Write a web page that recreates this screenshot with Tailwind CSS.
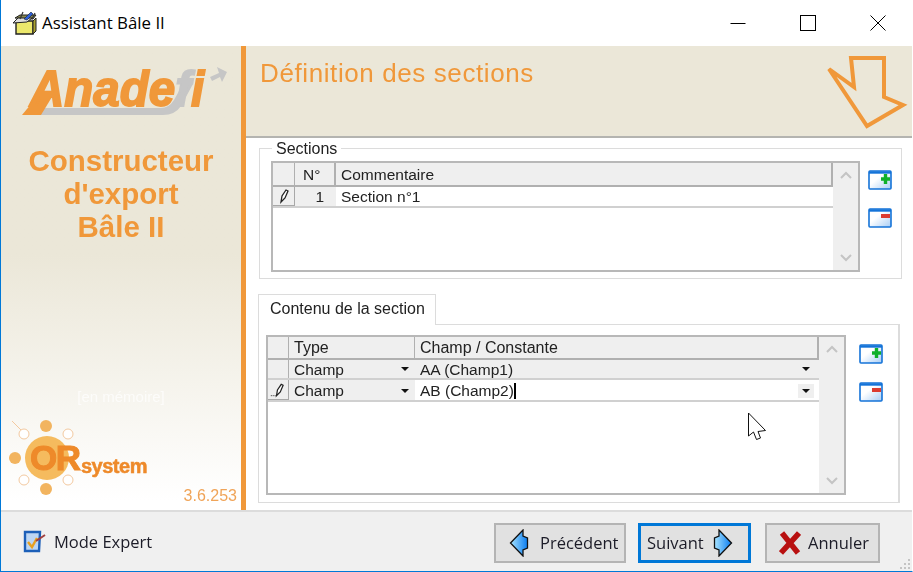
<!DOCTYPE html>
<html><head><meta charset="utf-8"><script src="https://cdn.jsdelivr.net/npm/@tailwindcss/browser@4"></script></head>
<body class="m-0 overflow-hidden">
<div class="relative w-[913px] h-[572px] bg-white flex flex-col border-l border-r border-b border-[#0078d7] border-r-white font-['Open_Sans',sans-serif] overflow-hidden">
  <!-- title bar -->
  <div class="h-[46px] flex items-center bg-white shrink-0">
    <svg class="ml-[11px] w-[26px] h-[26px]" viewBox="0 0 26 26">
      <path d="M3 8 L8 5 L24 5 L21 9 Z" fill="#8a8a50" stroke="#222" stroke-width="1"/>
      <path d="M4 11 H21 V24 H4 Z" fill="#ece86c" stroke="#222" stroke-width="1.4"/>
      <path d="M21 11 L24 8 V21 L21 24 Z" fill="#a8a030" stroke="#222" stroke-width="1"/>
      <path d="M1 13 L6 8 L20 8 L15 12 Z" fill="#dedede" stroke="#222" stroke-width="1"/>
      <path d="M12 9 L19 2 L21 4 L15 10 Z" fill="#2f5fd8" stroke="#123" stroke-width=".6"/>
      <path d="M8 9 L11 2 M20 9 L23 3" stroke="#333" stroke-width="1.2"/>
    </svg>
    <span class="ml-[4px] text-[16.85px] text-black leading-none">Assistant Bâle II</span>
    <div class="ml-auto flex items-center mr-[26px]">
      <svg class="w-[16px] h-[16px]" viewBox="0 0 16 16"><path d="M0.5 8.5 H15.5" stroke="#000"/></svg>
      <svg class="ml-[54px] w-[16px] h-[16px]" viewBox="0 0 16 16"><rect x=".5" y=".5" width="15" height="15" fill="none" stroke="#000"/></svg>
      <svg class="ml-[54px] w-[16px] h-[16px]" viewBox="0 0 16 16"><path d="M.5 .5 L15.5 15.5 M15.5 .5 L.5 15.5" stroke="#000"/></svg>
    </div>
  </div>

  <div class="flex h-[464px] shrink-0 [filter:blur(0.35px)]">
    <!-- left panel -->
    <div class="w-[240px] shrink-0 flex flex-col bg-gradient-to-b from-[#ebe7d8] from-[45%] to-white to-[98%] relative">
      <svg class="mt-[18px] w-[240px] h-[58px] block shrink-0" viewBox="0 0 240 58">
        <path d="M37 44 H160 Q168 44 173 36 L182 20 H192 L180 42 Q174 51 162 51 H37 Z" fill="#c6c6c6"/>
        <path d="M209 13 L218 9 L216 3 L226 8 L221 18 L219 13 L211 17 Z" fill="#c6c6c6"/>
        <path d="M21 51 L40 28 L54 28 L40 51 Z" fill="#f0983a"/>
        <text transform="translate(29,42) scale(0.95,1)" x="0" y="0" font-family="Liberation Sans" font-weight="700" font-style="italic" font-size="50" fill="#f0983a" stroke="#f0983a" stroke-width="1.8">Anade<tspan fill="#c6c6c6" stroke="#c6c6c6">f</tspan>i</text>
      </svg>
      <div class="mt-[22px] text-center font-['Liberation_Sans',sans-serif] font-bold text-[29.5px] leading-[33px] text-[#f0983a] shrink-0">Constructeur<br>d'export<br>Bâle II</div>
      <div class="mt-[145px] text-center font-['Liberation_Sans',sans-serif] text-[15px] leading-[18px] text-white/70 shrink-0">[en mémoire]</div>
      <div class="relative h-[104px] shrink-0">
        <svg class="w-[160px] h-[100px] block" viewBox="0 0 160 100">
          <g transform="translate(-1,-406)">
          <path d="M12 421 L22 431" stroke="#f3c9a0" stroke-width="1"/>
          <circle cx="46" cy="426" r="6" fill="#f2b45f"/><circle cx="46" cy="489" r="6" fill="#f2b45f"/><circle cx="15" cy="458" r="6" fill="#f2b45f"/>
          <circle cx="24" cy="434" r="5" fill="#fff" stroke="#f3c9a0"/><circle cx="68" cy="434" r="5" fill="#fff" stroke="#f3c9a0"/><circle cx="24" cy="480" r="5" fill="#fff" stroke="#f3c9a0"/><circle cx="68" cy="480" r="5" fill="#fff" stroke="#f3c9a0"/>
          <circle cx="47" cy="458" r="22" fill="#f5bb5e"/>
          <text x="30" y="470" font-family="Liberation Sans" font-weight="700" font-size="35" fill="#ee8a2a" stroke="#ee8a2a" stroke-width="1" letter-spacing="-1.5">OR</text>
          <text x="81" y="473" font-family="Liberation Sans" font-weight="700" font-size="20" fill="#ee8a2a" stroke="#ee8a2a" stroke-width=".5" letter-spacing="-.5">system</text>
          </g>
        </svg>
        <span class="absolute right-[4px] bottom-[5px] font-['Liberation_Sans',sans-serif] text-[16px] leading-[18px] text-[#f0a458]">3.6.253</span>
      </div>
    </div>
    <div class="w-[5px] shrink-0 bg-[#f0983a]"></div>

    <!-- right -->
    <div class="flex-1 flex flex-col bg-white min-w-0">
      <div class="h-[92px] shrink-0 bg-[#ebe7d8] border-b-2 border-[#b4b4b0] relative">
        <div class="pl-[14px] pt-[11px] font-['Liberation_Sans',sans-serif] text-[26px] leading-[32px] tracking-[0.6px] text-[#f0983a]">Définition des sections</div>
        <svg class="absolute right-[1px] top-[8px] w-[84px] h-[76px]" viewBox="0 0 84 76">
          <path d="M24 4 H57 V43 L76 51 L40 72 L2 15 L27 33 Z" fill="none" stroke="#f0983a" stroke-width="4"/>
        </svg>
      </div>
      <div class="flex-1 flex flex-col font-['Liberation_Sans',sans-serif] text-[15.5px] text-[#222]">
        <!-- sections group -->
        <div class="relative ml-[13px] mt-[10px] w-[643px] h-[131px] border border-[#dcdcdc] flex items-start">
          <span class="absolute left-[12px] -top-[9px] bg-white px-[4px] text-[16px] leading-[18px]">Sections</span>
          <div class="ml-[11px] mt-[12px] w-[589px] h-[111px] border-2 border-[#b8b8b8] flex">
            <div class="flex-1 min-w-0">
              <div class="flex h-[24px] bg-[#efefef] border-b-2 border-r-2 border-[#b0b0b0] leading-[24px]">
                <div class="w-[22px] border-r border-[#b0b0b0]"></div>
                <div class="w-[41px] pl-[8px] border-r-2 border-[#b0b0b0]">N°</div>
                <div class="pl-[5px]">Commentaire</div>
              </div>
              <div class="flex h-[21px] border-b-2 border-[#d0d0d0] leading-[20px]">
                <div class="w-[22px] bg-[#efefef] border-r border-b border-[#a8a8a8] flex items-center justify-center">
                  <svg class="w-[12px] h-[16px]" viewBox="0 0 12 16"><path d="M3 14 L4 8 L8 2 L10 3 L7 10 Z" fill="#fff" stroke="#222" stroke-width="1.3"/></svg>
                </div>
                <div class="w-[41px] bg-[#efefef] pr-[12px] text-right">1</div>
                <div class="pl-[5px]">Section n°1</div>
              </div>
            </div>
            <div class="w-[25px] bg-[#efefef] flex flex-col items-center justify-between py-[8px]">
              <svg class="w-[12px] h-[8px]" viewBox="0 0 12 8"><path d="M1 7 L6 2 L11 7" fill="none" stroke="#c4c4c4" stroke-width="2"/></svg>
              <svg class="w-[12px] h-[8px]" viewBox="0 0 12 8"><path d="M1 1 L6 6 L11 1" fill="none" stroke="#c4c4c4" stroke-width="2"/></svg>
            </div>
          </div>
          <div class="ml-[8px] mt-[21px] flex flex-col gap-[18px]">
            <svg class="w-[24px] h-[20px]" viewBox="0 0 24 20"><defs><linearGradient id="g" x1="0" y1="0" x2="1" y2="1"><stop offset=".4" stop-color="#fff"/><stop offset="1" stop-color="#a8cdf5"/></linearGradient></defs><rect x="1" y="1" width="22" height="18" rx="1" fill="url(#g)" stroke="#1473d8" stroke-width="1.6"/><path d="M1 2.5 H23" stroke="#1473d8" stroke-width="2.4"/><path d="M17.5 4 V14 M13 9 H22" stroke="#0fb02a" stroke-width="3.4"/></svg>
            <svg class="w-[24px] h-[20px]" viewBox="0 0 24 20"><rect x="1" y="1" width="22" height="18" rx="1" fill="url(#g)" stroke="#1473d8" stroke-width="1.6"/><path d="M1 2.5 H23" stroke="#1473d8" stroke-width="2.4"/><rect x="13" y="6" width="9" height="4" fill="#dc3c30"/></svg>
          </div>
        </div>

        <!-- tab -->
        <div class="ml-[12px] mt-[15px] relative z-10 w-[178px] h-[31px] border border-b-0 border-[#dcdcdc] bg-white pl-[11px] pt-[4px] text-[16px] leading-[20px]">Contenu de la section</div>
        <div class="ml-[12px] -mt-px w-[642px] h-[179px] border border-[#dcdcdc] border-r-2 flex items-start">
          <div class="ml-[7px] mt-[10px] w-[580px] h-[160px] border-2 border-[#b8b8b8] flex">
            <div class="flex-1 min-w-0">
              <div class="flex h-[23px] bg-[#efefef] border-b-2 border-r-2 border-[#b0b0b0] text-[16px] leading-[22px]">
                <div class="w-[21px] border-r border-[#b0b0b0]"></div>
                <div class="w-[126px] pl-[5px] border-r border-[#b0b0b0]">Type</div>
                <div class="pl-[5px]">Champ / Constante</div>
              </div>
              <div class="flex h-[20px] border-b-2 border-[#d0d0d0] leading-[19px] bg-[#efefef]">
                <div class="w-[21px] border-r border-[#b0b0b0]"></div>
                <div class="w-[126px] pl-[5px] pr-[6px] flex items-center justify-between">Champ<svg class="w-[8px] h-[4px]" viewBox="0 0 8 4"><path d="M0 0 H8 L4 4 Z" fill="#111"/></svg></div>
                <div class="flex-1 pl-[5px] pr-[9px] flex items-center justify-between">AA (Champ1)<svg class="w-[8px] h-[4px]" viewBox="0 0 8 4"><path d="M0 0 H8 L4 4 Z" fill="#111"/></svg></div>
              </div>
              <div class="flex h-[22px] border-b-2 border-[#d0d0d0] leading-[20px]">
                <div class="w-[21px] bg-[#efefef] border-r border-b border-[#a8a8a8] flex items-center justify-end pr-[3px]">
                  <svg class="w-[18px] h-[16px]" viewBox="0 0 18 16"><path d="M9 14 L10 8 L14 2 L16 3 L13 10 Z" fill="#fff" stroke="#222" stroke-width="1.3"/><path d="M3 14 H8" stroke="#222" stroke-dasharray="1 1"/></svg>
                </div>
                <div class="w-[126px] bg-[#efefef] pl-[5px] pr-[6px] pt-[1px] flex items-center justify-between">Champ<svg class="w-[8px] h-[4px]" viewBox="0 0 8 4"><path d="M0 0 H8 L4 4 Z" fill="#111"/></svg></div>
                <div class="flex-1 pl-[5px] pr-[5px] pt-[1px] flex items-center justify-between"><span class="flex items-center">AB (Champ2)<span class="w-[2px] h-[16px] bg-black"></span></span><span class="w-[16px] h-[14px] bg-[#efefef] flex items-center justify-center"><svg class="w-[8px] h-[4px]" viewBox="0 0 8 4"><path d="M0 0 H8 L4 4 Z" fill="#111"/></svg></span></div>
              </div>
            </div>
            <div class="w-[25px] bg-[#efefef] flex flex-col items-center justify-between py-[8px]">
              <svg class="w-[12px] h-[8px]" viewBox="0 0 12 8"><path d="M1 7 L6 2 L11 7" fill="none" stroke="#c4c4c4" stroke-width="2"/></svg>
              <svg class="w-[12px] h-[8px]" viewBox="0 0 12 8"><path d="M1 1 L6 6 L11 1" fill="none" stroke="#c4c4c4" stroke-width="2"/></svg>
            </div>
          </div>
          <div class="ml-[13px] mt-[19px] flex flex-col gap-[18px]">
            <svg class="w-[24px] h-[20px]" viewBox="0 0 24 20"><rect x="1" y="1" width="22" height="18" rx="1" fill="url(#g)" stroke="#1473d8" stroke-width="1.6"/><path d="M1 2.5 H23" stroke="#1473d8" stroke-width="2.4"/><path d="M17.5 4 V14 M13 9 H22" stroke="#0fb02a" stroke-width="3.4"/></svg>
            <svg class="w-[24px] h-[20px]" viewBox="0 0 24 20"><rect x="1" y="1" width="22" height="18" rx="1" fill="url(#g)" stroke="#1473d8" stroke-width="1.6"/><path d="M1 2.5 H23" stroke="#1473d8" stroke-width="2.4"/><rect x="13" y="6" width="9" height="4" fill="#dc3c30"/></svg>
          </div>
        </div>
      </div>
    </div>
  </div>

  <!-- footer -->
  <div class="flex-1 bg-[#f0f0f0] border-t-2 border-[#dcdcdc] flex items-center relative text-[16.5px] text-[#1c1c28] [filter:blur(0.3px)]">
    <svg class="ml-[21px] w-[26px] h-[26px]" viewBox="0 0 26 26">
      <path d="M3 3 H18 L17 22 H3 Z" fill="#bcd6f4" stroke="#1c5fb8" stroke-width="2.4"/>
      <path d="M6 13 L10 18 L15 9" fill="none" stroke="#e8a020" stroke-width="2.4"/>
      <path d="M14 12 L23 6" stroke="#a04040" stroke-width="2"/>
    </svg>
    <span class="ml-[6px] pt-[1px]">Mode Expert</span>
    <div class="ml-auto flex items-center mr-[32px] mt-[2px]">
      <div class="w-[132px] h-[40px] bg-[#e1e1e1] border-2 border-[#b4b4b4] flex items-center">
        <svg class="ml-[13px] w-[20px] h-[28px]" viewBox="0 0 20 28"><defs><linearGradient id="b" x1="0" y1="0" x2="1" y2="0"><stop offset="0" stop-color="#a8e4ff"/><stop offset="1" stop-color="#0a7cf0"/></linearGradient></defs><path d="M1.5 14 L14 1 V7 L18.5 9 V19 L14 21 V27 Z" fill="url(#b)" stroke="#111" stroke-width="1.3"/></svg>
        <span class="ml-[11px] pt-[1px]">Précédent</span>
      </div>
      <div class="ml-[12px] w-[113px] h-[40px] bg-[#e1e1e1] border-[3px] border-[#0078d7] flex items-center">
        <span class="ml-[6px] pt-[1px]">Suivant</span>
        <svg class="ml-[9px] w-[20px] h-[28px]" viewBox="0 0 20 28"><path d="M18.5 14 L6 1 V7 L1.5 9 V19 L6 21 V27 Z" fill="url(#b)" stroke="#111" stroke-width="1.3"/></svg>
      </div>
      <div class="ml-[14px] w-[115px] h-[40px] bg-[#e1e1e1] border-2 border-[#b4b4b4] flex items-center">
        <svg class="ml-[12px] w-[22px] h-[24px]" viewBox="0 0 22 24"><path d="M3 2 L19 22 M20 2 L2 22" stroke="#b81010" stroke-width="5.5"/></svg>
        <span class="ml-[7px] pt-[1px]">Annuler</span>
      </div>
    </div>
    <svg class="absolute right-[0px] bottom-0 w-[12px] h-[12px]" viewBox="0 0 12 12"><g fill="#c4c4c4"><rect x="8" y="0" width="2" height="2"/><rect x="4" y="4" width="2" height="2"/><rect x="8" y="4" width="2" height="2"/><rect x="0" y="8" width="2" height="2"/><rect x="4" y="8" width="2" height="2"/><rect x="8" y="8" width="2" height="2"/></g></svg>
  </div>

  <!-- mouse cursor -->
  <svg class="absolute left-[746px] top-[412px] w-[20px] h-[29px]" viewBox="0 0 20 29"><path d="M1.5 1 V24 L6.5 20 L9.5 27.5 L13.5 26 L11 19.5 L18.5 18.5 Z" fill="#fff" stroke="#111" stroke-width="1"/></svg>
</div>
</body></html>
